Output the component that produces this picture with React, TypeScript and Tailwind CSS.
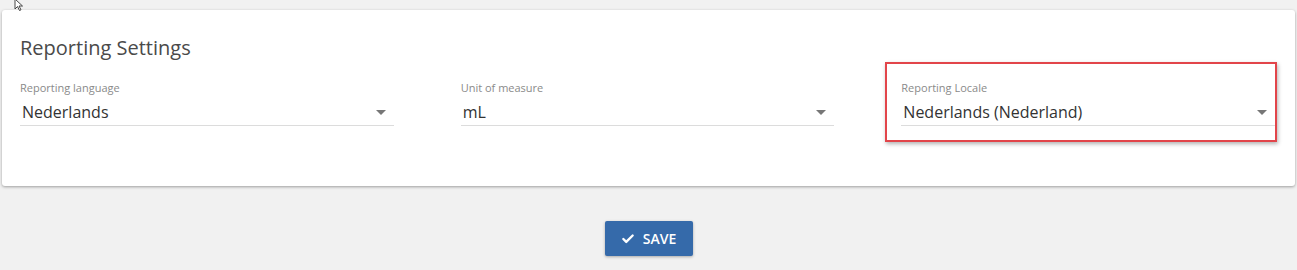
import { Check } from "lucide-react";

function Field({ label, value }: { label: string; value: string }) {
  return (
    <div className="flex flex-col">
      <label className="text-[11px] leading-[14px] text-[#8a8a8a]">{label}</label>
      <div className="flex items-start justify-between h-[31px] pt-[7px] border-b border-[#dcdcdc] pl-[2px] pr-[8px]">
        <span className="text-[16px] leading-[20px] text-[#333]">{value}</span>
        <span className="mt-[8px] w-0 h-0 border-l-[5px] border-r-[5px] border-t-[5px] border-l-transparent border-r-transparent border-t-[#777]" />
      </div>
    </div>
  );
}

export default function App() {
  return (
    <div
      className="relative w-full h-[270px] bg-[#f1f1f1] pt-[10px] px-[2px]"
      style={{ fontFamily: '"Open Sans", "Noto Sans", sans-serif' }}
    >
      <svg className="absolute left-[14px] top-[-2px]" width="12" height="14" viewBox="0 0 12 14">
        <path d="M1 1 L1 11 L3.5 8.5 L5.5 12.5 L7 11.8 L5 8 L8.5 8 Z" fill="#fff" stroke="#333" strokeWidth="0.9" />
      </svg>

      <div className="bg-white rounded-[3px] h-[176px] shadow-[0_1px_3px_rgba(0,0,0,0.35)] px-[18px] pt-[25px]">
        <h2 className="text-[20px] leading-[26px] text-[#4a4a4a]">Reporting Settings</h2>
        <div className="grid grid-cols-3 gap-x-[67px] mt-[20px] pr-[2px]">
          <Field label="Reporting language" value="Nederlands" />
          <Field label="Unit of measure" value="mL" />
          <div className="relative">
            <div className="absolute left-[-16px] right-[-2px] top-[-19px] bottom-[-16px] border-2 border-[#e2454a] shadow-[1px_2px_4px_rgba(0,0,0,0.3)]" />
            <Field label="Reporting Locale" value="Nederlands (Nederland)" />
          </div>
        </div>
      </div>

      <div className="flex justify-center mt-[35px]">
        <button className="flex items-center gap-[8px] h-[35px] w-[88px] justify-center bg-[#356aaa] text-white text-[14px] font-semibold rounded-[2px] shadow-[0_1px_3px_rgba(0,0,0,0.3)]">
          <Check size={14} strokeWidth={4} />
          SAVE
        </button>
      </div>
    </div>
  );
}
